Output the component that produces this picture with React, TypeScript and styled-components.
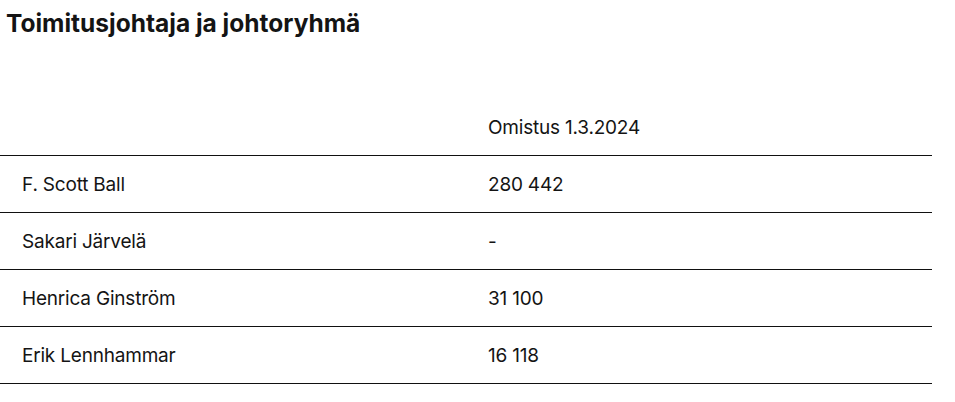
import React from 'react';
import styled, { createGlobalStyle } from 'styled-components';

const GlobalStyle = createGlobalStyle`
  html, body {
    margin: 0;
    padding: 0;
    background: #fff;
  }
  body {
    font-family: Inter, "Noto Sans", "Liberation Sans", sans-serif;
    color: #141414;
  }
`;

const Page = styled.div`
  width: 932px;
  padding-top: 8px;
`;

const Title = styled.h2`
  margin: 0 0 0 6px;
  font-size: 24.5px;
  line-height: 30px;
  font-weight: 700;
  letter-spacing: 0;
`;

const Table = styled.table`
  width: 100%;
  margin-top: 61px;
  border-collapse: collapse;
  table-layout: fixed;
  font-size: 19px;
`;

const Cell = styled.td`
  height: 56px;
  padding: 0 22px;
  vertical-align: middle;
  text-align: left;
  font-weight: 400;
  letter-spacing: -0.2px;
  border-bottom: 1px solid #111;
`;

const rows = [
  { name: 'F. Scott Ball', shares: '280 442' },
  { name: 'Sakari Järvelä', shares: '-' },
  { name: 'Henrica Ginström', shares: '31 100' },
  { name: 'Erik Lennhammar', shares: '16 118' },
];

const App = () => {
  return (
    <Page>
      <GlobalStyle />
      <Title>Toimitusjohtaja ja johtoryhmä</Title>
      <Table>
        <thead>
          <tr>
            <Cell as="th"></Cell>
            <Cell as="th">Omistus 1.3.2024</Cell>
          </tr>
        </thead>
        <tbody>
          {rows.map((row) => (
            <tr key={row.name}>
              <Cell>{row.name}</Cell>
              <Cell>{row.shares}</Cell>
            </tr>
          ))}
        </tbody>
      </Table>
    </Page>
  );
};

export default App;
